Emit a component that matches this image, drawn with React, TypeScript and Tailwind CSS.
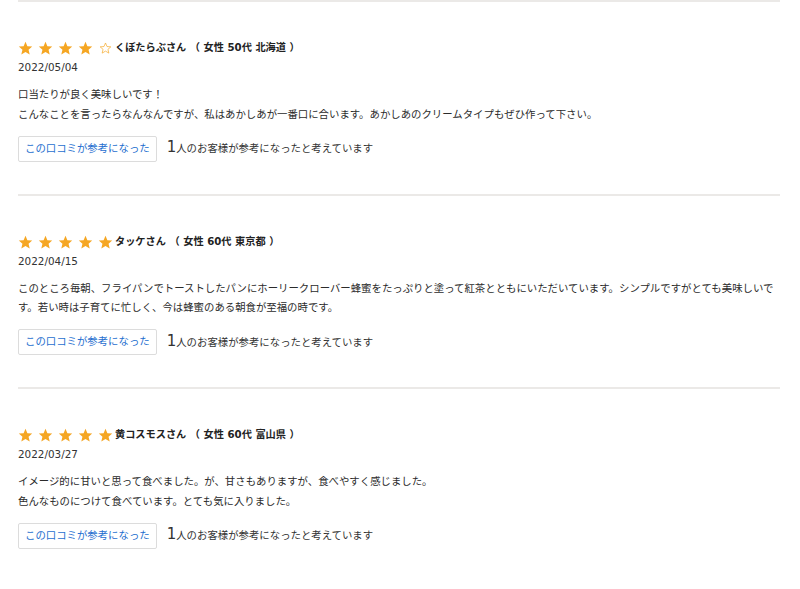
import React from "react";

interface Review {
  id: number;
  rating: number;
  name: string;
  profile: string;
  date: string;
  lines: string[];
  helpful: number;
}

const reviews: Review[] = [
  {
    id: 1,
    rating: 4,
    name: "くぼたらぶさん",
    profile: "（ 女性 50代 北海道 ）",
    date: "2022/05/04",
    lines: [
      "口当たりが良く美味しいです！",
      "こんなことを言ったらなんなんですが、私はあかしあが一番口に合います。あかしあのクリームタイプもぜひ作って下さい。",
    ],
    helpful: 1,
  },
  {
    id: 2,
    rating: 5,
    name: "タッケさん",
    profile: "（ 女性 60代 東京都 ）",
    date: "2022/04/15",
    lines: [
      "このところ毎朝、フライパンでトーストしたパンにホーリークローバー蜂蜜をたっぷりと塗って紅茶とともにいただいています。シンプルですがとても美味しいです。若い時は子育てに忙しく、今は蜂蜜のある朝食が至福の時です。",
    ],
    helpful: 1,
  },
  {
    id: 3,
    rating: 5,
    name: "黄コスモスさん",
    profile: "（ 女性 60代 富山県 ）",
    date: "2022/03/27",
    lines: [
      "イメージ的に甘いと思って食べました。が、甘さもありますが、食べやすく感じました。",
      "色んなものにつけて食べています。とても気に入りました。",
    ],
    helpful: 1,
  },
];

const Star = ({ filled }: { filled: boolean }) => (
  <svg width="15" height="14" viewBox="0 0 24 23" className="shrink-0">
    <path
      d="M12 1.2l3.1 7.3 7.9.6-6 5.2 1.9 7.7L12 17.9 5.1 22l1.9-7.7-6-5.2 7.9-.6z"
      fill={filled ? "#f5a623" : "none"}
      stroke="#f5a623"
      strokeWidth={filled ? 0 : 1.4}
      strokeLinejoin="round"
      transform={filled ? undefined : "translate(2.4 2.3) scale(0.8)"}
    />
  </svg>
);

const ReviewItem: React.FC<{ review: Review }> = ({ review }) => {
  return (
    <div className="border-t-2 border-[#ebe9e7] pt-[38px] pb-[32px]">
      {/* Stars & reviewer */}
      <div className="flex items-center h-[16px]">
        <div className="flex items-center gap-[5px]">
          {[1, 2, 3, 4, 5].map((i) => (
            <Star key={i} filled={i <= review.rating} />
          ))}
        </div>
        <span className="ml-[2px] font-bold text-[10.2px] text-[#222]">
          {review.name} {review.profile}
        </span>
      </div>

      {/* Date */}
      <div className="mt-[3px] text-[10.4px] leading-[16px] text-[#333]">{review.date}</div>

      {/* Body */}
      <div className="mt-[10px] text-[10.4px] leading-[19.5px] text-[#2b2b2b]">
        {review.lines.map((line, i) => (
          <p key={i}>{line}</p>
        ))}
      </div>

      {/* Helpful */}
      <div className="mt-[11.5px] flex items-center">
        <button className="h-[26px] px-[6px] border border-[#dcdcdc] rounded-[2px] bg-white text-[10.4px] text-[#1f6fcf]">
          この口コミが参考になった
        </button>
        <span className="ml-[10px] text-[#333] text-[10.4px] flex items-baseline">
          <span className="text-[15px] leading-none">{review.helpful}</span>
          <span>人のお客様が参考になったと考えています</span>
        </span>
      </div>
    </div>
  );
};

export default function App() {
  return (
    <div
      className="w-[800px] h-[589px] overflow-hidden bg-white pl-[18px] pr-[20px]"
      style={{ fontFamily: '"DejaVu Sans", "Noto Sans CJK JP", sans-serif' }}
    >
      {reviews.map((r) => (
        <ReviewItem key={r.id} review={r} />
      ))}
    </div>
  );
}
